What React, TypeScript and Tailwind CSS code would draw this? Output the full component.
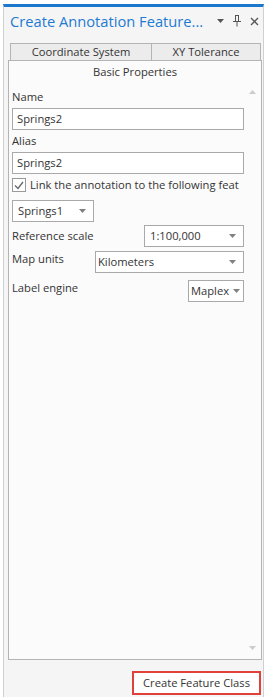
import React from "react";

const font = "font-['Segoe_UI','Open_Sans','Noto_Sans',sans-serif]";

function Caret({ color = "#6a6a6a" }: { color?: string }) {
  return (
    <svg width="7" height="4" viewBox="0 0 7 4" className="shrink-0">
      <path d="M0 0h7L3.5 4z" fill={color} />
    </svg>
  );
}

function Dropdown({ value, className, pad }: { value: string; className: string; pad: string }) {
  return (
    <div className={`h-[22px] bg-white border border-[#a9a9a9] flex items-center justify-between gap-[4px] ${pad} ${className}`}>
      <span className="whitespace-nowrap">{value}</span>
      <Caret color="#808080" />
    </div>
  );
}

export default function App() {
  return (
    <div className={`w-[269px] h-[697px] bg-white pt-[4px] pl-[3px] overflow-hidden text-[11.2px] text-[#333333] ${font}`}>
      <div className="w-[261px] h-[693px] border-x border-[#d0d0d0] border-t-[3px] border-t-[#1a79cc] bg-[#f5f5f5] flex flex-col">
        {/* header */}
        <div className="h-[28px] flex items-center pl-[6px] pr-[4px]">
          <span className="flex-1 text-[14.7px] text-[#1e7bd3] whitespace-nowrap">Create Annotation Feature...</span>
          <div className="flex items-center gap-[9px] text-[#555]">
            <Caret color="#555555" />
            <svg width="8" height="12" viewBox="0 0 8 12">
              <path d="M2 0.5h4M2.5 0.5v6M5.5 0.5v6M0 6.5h8M4 6.5v5" stroke="#555" strokeWidth="1" fill="none" />
            </svg>
            <svg width="9" height="9" viewBox="0 0 9 9">
              <path d="M1 1l7 7M8 1l-7 7" stroke="#555" strokeWidth="1.3" />
            </svg>
          </div>
        </div>

        {/* tabs */}
        <div className="mt-[8px] ml-[6px] flex h-[18px]">
          <div className="w-[142px] border border-[#b4b4b4] bg-[#ececec] flex items-center justify-center leading-none">
            Coordinate System
          </div>
          <div className="w-[109px] border border-l-0 border-[#b4b4b4] bg-[#ececec] flex items-center justify-center leading-none">
            XY Tolerance
          </div>
        </div>

        {/* panel */}
        <div className="-mt-[1px] ml-[4px] w-[254px] h-[600px] border border-[#b4b4b4] bg-[#fbfbfb] flex flex-col">
          <div className="h-[23px] flex items-center justify-center">Basic Properties</div>
          <div className="flex-1 flex">
            <div className="w-[235px] pl-[3px] flex flex-col">
              <div className="mt-[5px] h-[16px] leading-[16px]">Name</div>
              <div className="mt-[3px] h-[22px] bg-white border border-[#a9a9a9] flex items-center pl-[4px]">Springs2</div>
              <div className="mt-[3px] h-[16px] leading-[16px]">Alias</div>
              <div className="mt-[3px] h-[22px] bg-white border border-[#a9a9a9] flex items-center pl-[4px]">Springs2</div>
              <div className="mt-[3px] h-[16px] flex items-center gap-[4px] overflow-hidden">
                <div className="w-[14px] h-[14px] shrink-0 border border-[#9a9a9a] bg-white flex items-center justify-center">
                  <svg width="10" height="9" viewBox="0 0 10 9">
                    <path d="M1 4.5l3 3L9 1" stroke="#6a6a6a" strokeWidth="1.4" fill="none" />
                  </svg>
                </div>
                <span className="whitespace-nowrap">Link the annotation to the following feat</span>
              </div>
              <Dropdown value="Springs1" className="mt-[7px] w-[82px]" pad="pl-[5px] pr-[7px]" />
              <div className="mt-[3px] flex items-center justify-between">
                <span>Reference scale</span>
                <Dropdown value="1:100,000" className="w-[100px]" pad="pl-[5px] pr-[7px]" />
              </div>
              <div className="mt-[4px] flex items-start justify-between">
                <span className="leading-[16px]">Map units</span>
                <Dropdown value="Kilometers" className="w-[149px]" pad="pl-[2px] pr-[7px]" />
              </div>
              <div className="mt-[7px] flex items-start justify-between">
                <span className="leading-[16px]">Label engine</span>
                <Dropdown value="Maplex" className="w-[56px]" pad="pl-[2px] pr-[5px]" />
              </div>
            </div>
            <div className="flex-1 flex flex-col items-center justify-between pt-[6px] pb-[9px]">
              <svg width="7" height="4" viewBox="0 0 7 4">
                <path d="M0 4h7L3.5 0z" fill="#cccccc" />
              </svg>
              <Caret color="#cccccc" />
            </div>
          </div>
        </div>

        {/* footer */}
        <div className="mt-[11px] flex justify-end pr-[2px]">
          <button className="w-[129px] h-[24px] border-2 border-[#e0413a] bg-white flex items-center justify-center text-[11.2px] text-[#333]">
            Create Feature Class
          </button>
        </div>
      </div>
    </div>
  );
}
